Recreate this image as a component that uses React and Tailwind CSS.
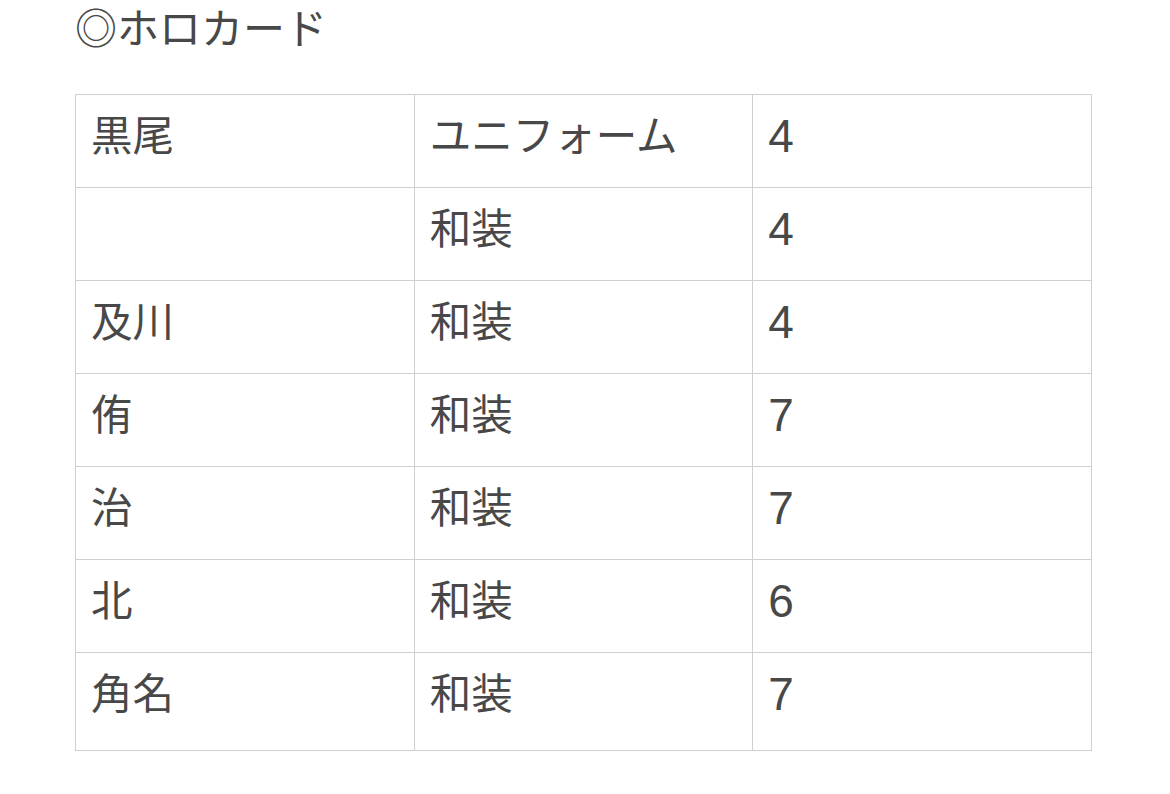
import React from 'react';

const rows = [
  ['黒尾', 'ユニフォーム', '4'],
  ['', '和装', '4'],
  ['及川', '和装', '4'],
  ['侑', '和装', '7'],
  ['治', '和装', '7'],
  ['北', '和装', '6'],
  ['角名', '和装', '7'],
];

export default function App() {
  return (
    <div
      className="min-h-screen bg-white pl-[75px] text-[#484848]"
      style={{ fontFamily: '"Liberation Sans", "Noto Sans CJK JP", sans-serif' }}
    >
      <div className="h-[94px] pt-[2px] text-[42px] leading-[56px]">◎ホロカード</div>
      <table className="w-[1017px] table-fixed border-collapse text-[41.5px]">
        <tbody>
          {rows.map((r, i) => (
            <tr key={i} className={i === rows.length - 1 ? 'h-[98px]' : 'h-[93px]'}>
              <td className="border border-[#cfcfcf] px-[15px] pt-[17px] align-top leading-[50px]">
                {r[0]}
              </td>
              <td className="border border-[#cfcfcf] px-[15px] pt-[17px] align-top leading-[50px]">
                {r[1]}
              </td>
              <td className="border border-[#cfcfcf] px-[15px] pt-[16px] align-top text-[46px] leading-[50px]">
                {r[2]}
              </td>
            </tr>
          ))}
        </tbody>
      </table>
    </div>
  );
}
